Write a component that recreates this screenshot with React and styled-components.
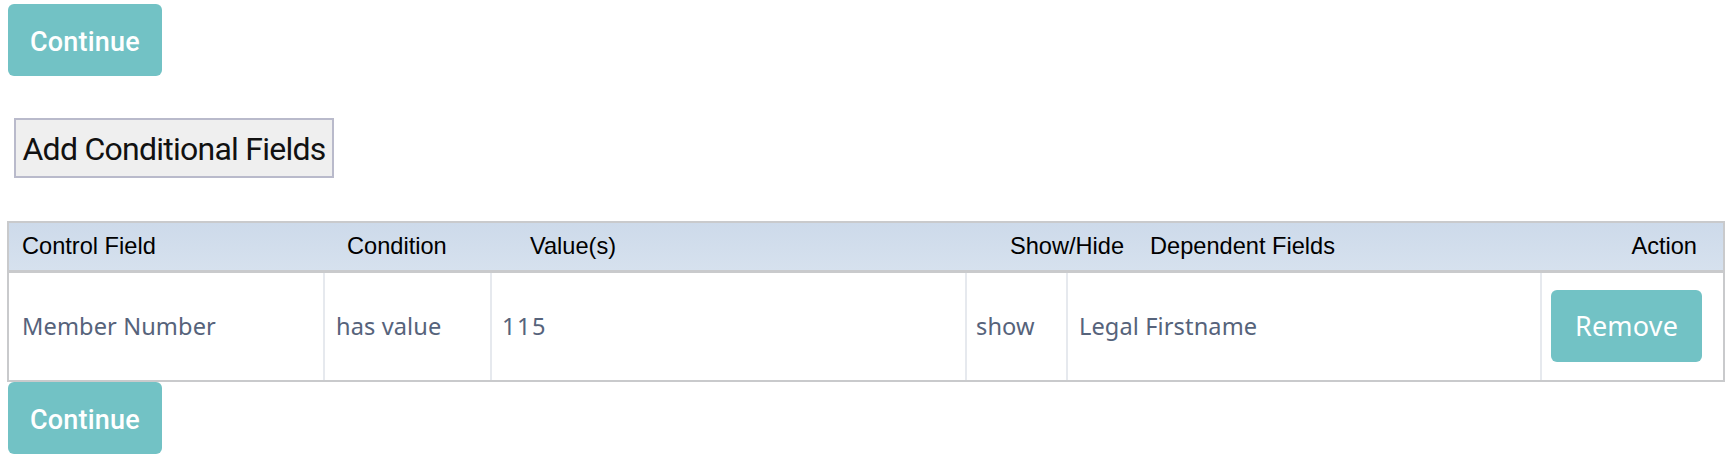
import React from 'react';
import styled, { createGlobalStyle } from 'styled-components';

const GlobalStyle = createGlobalStyle`
  html, body {
    margin: 0;
    padding: 0;
    background: #fff;
  }
  * {
    box-sizing: border-box;
  }
`;

const Page = styled.div`
  padding: 4px 0 0 7px;
  display: flex;
  flex-direction: column;
  align-items: flex-start;
`;

export const Button = styled.button`
  background-color: #72c2c5;
  border: none;
  border-radius: 6px;
  color: #fff;
  cursor: pointer;
  margin-left: ${(props) => props.indent || 0}px;
  width: ${(props) => props.width}px;
  height: 72px;
  padding: ${(props) => (props.plain ? '0' : '4px 0 0')};
  font-family: ${(props) =>
    props.plain ? '"Noto Sans", sans-serif' : 'Roboto, "Noto Sans", sans-serif'};
  font-weight: ${(props) => (props.plain ? 400 : 500)};
  font-size: 27px;
  letter-spacing: ${(props) => (props.plain ? '0.2px' : '0.2px')};
  flex-shrink: 0;
`;

const AddButton = styled.button`
  margin: 42px 0 43px 7px;
  width: 320px;
  height: 60px;
  padding: 2px 4px 0;
  background: #efefef;
  border: 2px solid #b9bacb;
  color: #111;
  font-family: Roboto, sans-serif;
  font-size: 32px;
  letter-spacing: -0.75px;
  text-align: center;
  cursor: pointer;
`;

const Table = styled.div`
  width: 1718px;
  border: 2px solid #c9cacc;
`;

const HeadRow = styled.div`
  display: grid;
  grid-template-columns: 325px 183px 480px 140px 423px 163px;
  height: 50px;
  align-items: center;
  background: linear-gradient(#cddaea, #d6e1ee);
  border-bottom: 3px solid #c9cacc;
  font-family: "Liberation Sans", Arial, sans-serif;
  font-size: 23.6px;
  color: #000;
`;

const HeadCell = styled.div`
  padding: 0 ${(props) => (props.right ? '26px' : '0')} 0 ${(props) => (props.right ? '0' : '13px')};
  text-align: ${(props) => (props.right ? 'right' : 'left')};
  white-space: nowrap;
`;

const BodyRow = styled.div`
  display: grid;
  grid-template-columns: 314px 167px 475px 101px 474px 183px;
  height: 107px;
`;

const Cell = styled.div`
  display: flex;
  align-items: center;
  padding-left: ${(props) => props.pad || 11}px;
  padding-bottom: 2px;
  border-left: ${(props) => (props.first ? 'none' : '2px solid #e6e9ee')};
  font-family: "Noto Sans", sans-serif;
  font-size: 23.6px;
  letter-spacing: ${(props) => (props.spaced ? '1.5px' : '0.1px')};
  color: #56637b;
  white-space: nowrap;
`;

const columns = ['Control Field', 'Condition', 'Value(s)', 'Show/Hide', 'Dependent Fields', 'Action'];

const App = () => (
  <>
    <GlobalStyle />
    <Page>
      <Button width={154} indent={1}>Continue</Button>
      <AddButton>Add Conditional Fields</AddButton>
      <Table>
        <HeadRow>
          {columns.map((c, i) => (
            <HeadCell key={c} right={i === columns.length - 1}>
              {c}
            </HeadCell>
          ))}
        </HeadRow>
        <BodyRow>
          <Cell first pad={13}>Member Number</Cell>
          <Cell>has value</Cell>
          <Cell pad={10} spaced>115</Cell>
          <Cell pad={9}>show</Cell>
          <Cell>Legal Firstname</Cell>
          <Cell pad={9}>
            <Button width={151} plain>Remove</Button>
          </Cell>
        </BodyRow>
      </Table>
      <Button width={154} indent={1}>Continue</Button>
    </Page>
  </>
);

export default App;
